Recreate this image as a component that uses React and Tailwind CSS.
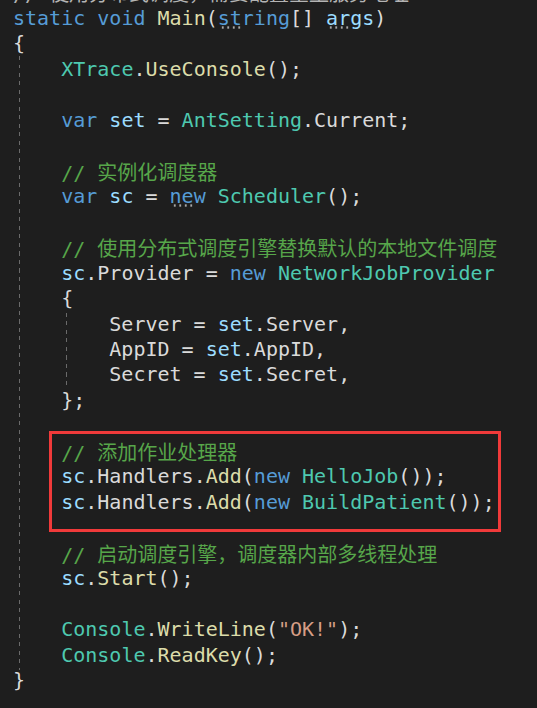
import React from 'react';

// colour helpers for the VS dark theme tokens
const K = ({ children }) => <span className="text-[#569cd6]">{children}</span>;
const T = ({ children }) => <span className="text-[#4ec9b0]">{children}</span>;
const F = ({ children }) => <span className="text-[#dcdcaa]">{children}</span>;
const V = ({ children }) => <span className="text-[#9cdcfe]">{children}</span>;
const P = ({ children }) => <span className="text-[#dadada]">{children}</span>;
const S = ({ children }) => <span className="text-[#d69d85]">{children}</span>;

const Cn = ({ children }) => (
  <span className="font-['Noto_Sans_CJK_SC',sans-serif] text-[20px]">{children}</span>
);

const Comment = ({ text, indent = '    ' }) => (
  <Line>
    {indent}
    <span className="text-[#57a64a]">
      // <Cn>{text}</Cn>
    </span>
  </Line>
);

const Hint = ({ children }) => (
  <span className="relative inline-block">
    {children}
    <span className="absolute left-[2px] top-[20px] h-[3px] w-[22px] bg-[radial-gradient(circle,#a8a8a8_1px,transparent_1.3px)] bg-[length:5.5px_3px]" />
  </span>
);

const Line = ({ children }) => <div className="h-[25.48px] shrink-0">{children}</div>;

export default function App() {
  return (
    <div className="h-[708px] w-[537px] overflow-hidden bg-[#1e1e1e]">
      <div className="relative flex h-full flex-col pl-[13px] font-['DejaVu_Sans_Mono','Noto_Sans_CJK_SC',monospace] text-[20px] leading-[25.48px] whitespace-pre text-[#dadada]">
        <div className="mt-[-19.6px] flex flex-col">
          <Line>
            <span className="text-[#b4b4b4]">
              // <Cn>使用分布式调度，需要配置星尘服务地址</Cn>
            </span>
          </Line>
          <Line>
            <K>static</K> <K>void</K> <F>Main</F>(<Hint><K>string</K></Hint>[] <Hint><V>args</V></Hint>)
          </Line>
          <Line>{'{'}</Line>
          <Line>
            {'    '}<T>XTrace</T>.<F>UseConsole</F>();
          </Line>
          <Line />
          <Line>
            {'    '}<K>var</K> <V>set</V> = <T>AntSetting</T>.<P>Current</P>;
          </Line>
          <Line />
          <Comment text="实例化调度器" />
          <Line>
            {'    '}<K>var</K> <V>sc</V> = <Hint><K>new</K></Hint> <T>Scheduler</T>();
          </Line>
          <Line />
          <Comment text="使用分布式调度引擎替换默认的本地文件调度" />
          <Line>
            {'    '}<V>sc</V>.<P>Provider</P> = <K>new</K> <T>NetworkJobProvider</T>
          </Line>
          <Line>{'    {'}</Line>
          <Line>
            {'        '}<P>Server</P> = <V>set</V>.<P>Server</P>,
          </Line>
          <Line>
            {'        '}<P>AppID</P> = <V>set</V>.<P>AppID</P>,
          </Line>
          <Line>
            {'        '}<P>Secret</P> = <V>set</V>.<P>Secret</P>,
          </Line>
          <Line>{'    };'}</Line>
          <Line />
          <Comment text="添加作业处理器" />
          <Line>
            {'    '}<V>sc</V>.<P>Handlers</P>.<F>Add</F>(<K>new</K> <T>HelloJob</T>());
          </Line>
          <Line>
            {'    '}<V>sc</V>.<P>Handlers</P>.<F>Add</F>(<K>new</K> <T>BuildPatient</T>());
          </Line>
          <Line />
          <Comment text="启动调度引擎，调度器内部多线程处理" />
          <Line>
            {'    '}<V>sc</V>.<F>Start</F>();
          </Line>
          <Line />
          <Line>
            {'    '}<T>Console</T>.<F>WriteLine</F>(<S>"OK!"</S>);
          </Line>
          <Line>
            {'    '}<T>Console</T>.<F>ReadKey</F>();
          </Line>
          <Line>{'}'}</Line>
        </div>

        {/* indent guides */}
        <div className="absolute left-[18.5px] top-[56px] h-[614px] w-px bg-[repeating-linear-gradient(to_bottom,#6a6a6a_0_4px,transparent_4px_8.5px)]" />
        <div className="absolute left-[66px] top-[313px] h-[75px] w-px bg-[repeating-linear-gradient(to_bottom,#6a6a6a_0_4px,transparent_4px_8.5px)]" />

        {/* highlight box */}
        <div className="absolute left-[49px] top-[431px] h-[101px] w-[452px] border-[3px] border-[#f03a3a]" />
      </div>
    </div>
  );
}
